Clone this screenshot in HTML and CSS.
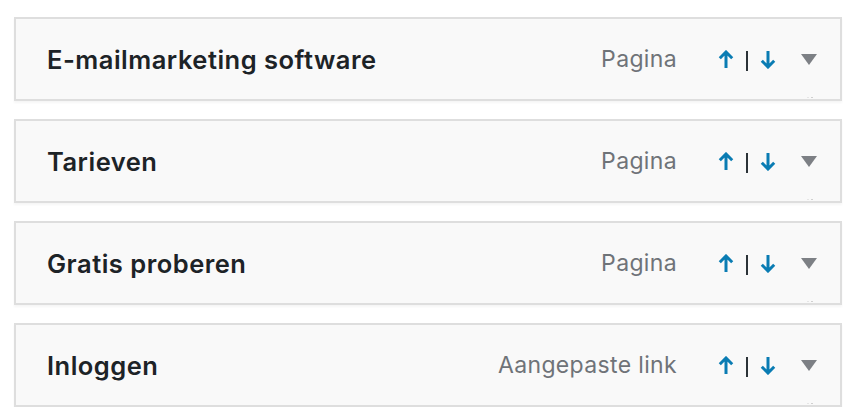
FILE: index.html
```html
<!DOCTYPE html>
<html lang="nl">
<head>
<meta charset="utf-8">
<title>Menu</title>
<link rel="stylesheet" href="styles.css">
</head>
<body>
<ul class="menu">
  <li class="item">
    <span class="title">E-mailmarketing software</span>
    <span class="controls">
      <span class="type">Pagina</span>
      <span class="move">
        <svg class="arrow" width="16" height="19" viewBox="0 0 16 19"><path d="M8 18V2M1.8 8.2L8 2l6.2 6.2" fill="none" stroke="#0a7cb3" stroke-width="3"/></svg>
        <span class="pipe"></span>
        <svg class="arrow" width="16" height="19" viewBox="0 0 16 19"><path d="M8 1v16M1.8 10.8L8 17l6.2-6.2" fill="none" stroke="#0a7cb3" stroke-width="3"/></svg>
      </span>
      <svg class="toggle" width="16" height="11" viewBox="0 0 16 11"><path d="M0 0h16L8 11z" fill="#7d8085"/></svg>
    </span>
    <span class="dots"></span>
  </li>
  <li class="item">
    <span class="title">Tarieven</span>
    <span class="controls">
      <span class="type">Pagina</span>
      <span class="move">
        <svg class="arrow" width="16" height="19" viewBox="0 0 16 19"><path d="M8 18V2M1.8 8.2L8 2l6.2 6.2" fill="none" stroke="#0a7cb3" stroke-width="3"/></svg>
        <span class="pipe"></span>
        <svg class="arrow" width="16" height="19" viewBox="0 0 16 19"><path d="M8 1v16M1.8 10.8L8 17l6.2-6.2" fill="none" stroke="#0a7cb3" stroke-width="3"/></svg>
      </span>
      <svg class="toggle" width="16" height="11" viewBox="0 0 16 11"><path d="M0 0h16L8 11z" fill="#7d8085"/></svg>
    </span>
    <span class="dots"></span>
  </li>
  <li class="item">
    <span class="title">Gratis proberen</span>
    <span class="controls">
      <span class="type">Pagina</span>
      <span class="move">
        <svg class="arrow" width="16" height="19" viewBox="0 0 16 19"><path d="M8 18V2M1.8 8.2L8 2l6.2 6.2" fill="none" stroke="#0a7cb3" stroke-width="3"/></svg>
        <span class="pipe"></span>
        <svg class="arrow" width="16" height="19" viewBox="0 0 16 19"><path d="M8 1v16M1.8 10.8L8 17l6.2-6.2" fill="none" stroke="#0a7cb3" stroke-width="3"/></svg>
      </span>
      <svg class="toggle" width="16" height="11" viewBox="0 0 16 11"><path d="M0 0h16L8 11z" fill="#7d8085"/></svg>
    </span>
    <span class="dots"></span>
  </li>
  <li class="item">
    <span class="title">Inloggen</span>
    <span class="controls">
      <span class="type">Aangepaste link</span>
      <span class="move">
        <svg class="arrow" width="16" height="19" viewBox="0 0 16 19"><path d="M8 18V2M1.8 8.2L8 2l6.2 6.2" fill="none" stroke="#0a7cb3" stroke-width="3"/></svg>
        <span class="pipe"></span>
        <svg class="arrow" width="16" height="19" viewBox="0 0 16 19"><path d="M8 1v16M1.8 10.8L8 17l6.2-6.2" fill="none" stroke="#0a7cb3" stroke-width="3"/></svg>
      </span>
      <svg class="toggle" width="16" height="11" viewBox="0 0 16 11"><path d="M0 0h16L8 11z" fill="#7d8085"/></svg>
    </span>
    <span class="dots"></span>
  </li>
</ul>
</body>
</html>
```
FILE: styles.css
```css
html, body {
  margin: 0;
  padding: 0;
  background: #ffffff;
}
body {
  font-family: Inter, "Noto Sans", "Liberation Sans", sans-serif;
}
.menu {
  list-style: none;
  margin: 0;
  padding: 17px 0 0 14px;
  display: flex;
  flex-direction: column;
  gap: 18px;
}
.item {
  position: relative;
  box-sizing: border-box;
  width: 828px;
  height: 84px;
  border: 2px solid #dedede;
  background: #f9f9f9;
  box-shadow: 0 2px 2px rgba(0, 0, 0, 0.04);
  display: flex;
  align-items: center;
  justify-content: space-between;
  padding: 0 23px 0 31px;
}
.title {
  font-size: 25.5px;
  font-weight: 600;
  color: #1d2327;
  letter-spacing: 0.5px;
  margin-top: 1px;
}
.controls {
  display: flex;
  align-items: center;
}
.type {
  font-size: 23px;
  color: #6f7378;
  letter-spacing: 0.35px;
  margin-right: 41px;
}
.move {
  display: flex;
  align-items: center;
  gap: 12px;
}
.arrow {
  display: block;
}
.pipe {
  display: block;
  width: 2px;
  height: 20px;
  background: #2c3338;
  margin-top: 3px;
}
.toggle {
  display: block;
  margin-left: 25px;
  margin-top: 1px;
}
.dots {
  position: absolute;
  right: 27px;
  bottom: 1px;
  width: 6px;
  height: 1px;
  border-left: 2px solid #e6e6e6;
  border-right: 2px solid #d0d0d0;
  box-sizing: border-box;
}
```
